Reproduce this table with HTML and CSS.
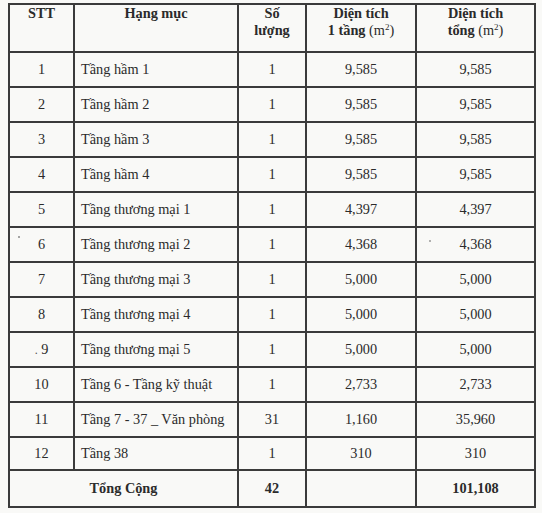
FILE: index.html
```html
<!DOCTYPE html>
<html lang="vi">
<head>
<meta charset="utf-8">
<title>Bảng diện tích</title>
<link rel="stylesheet" href="styles.css">
</head>
<body>
<table class="area-table">
  <colgroup>
    <col class="c-stt"><col class="c-name"><col class="c-qty"><col class="c-one"><col class="c-total">
  </colgroup>
  <thead>
    <tr class="head">
      <th>STT</th>
      <th>Hạng mục</th>
      <th>Số<br>lượng</th>
      <th>Diện tích<br>1 tầng <span class="unit">(m<sup>2</sup>)</span></th>
      <th>Diện tích<br>tổng <span class="unit">(m<sup>2</sup>)</span></th>
    </tr>
  </thead>
  <tbody>
    <tr><td>1</td><td class="name">Tầng hầm 1</td><td>1</td><td>9,585</td><td>9,585</td></tr>
    <tr><td>2</td><td class="name">Tầng hầm 2</td><td>1</td><td>9,585</td><td>9,585</td></tr>
    <tr><td>3</td><td class="name">Tầng hầm 3</td><td>1</td><td>9,585</td><td>9,585</td></tr>
    <tr><td>4</td><td class="name">Tầng hầm 4</td><td>1</td><td>9,585</td><td>9,585</td></tr>
    <tr><td>5</td><td class="name">Tầng thương mại 1</td><td>1</td><td>4,397</td><td>4,397</td></tr>
    <tr><td class="speck-left">6</td><td class="name">Tầng thương mại 2</td><td>1</td><td>4,368</td><td class="speck-right">4,368</td></tr>
    <tr><td>7</td><td class="name">Tầng thương mại 3</td><td>1</td><td>5,000</td><td>5,000</td></tr>
    <tr><td>8</td><td class="name">Tầng thương mại 4</td><td>1</td><td>5,000</td><td>5,000</td></tr>
    <tr><td><span class="dot">.</span> 9</td><td class="name">Tầng thương mại 5</td><td>1</td><td>5,000</td><td>5,000</td></tr>
    <tr><td>10</td><td class="name">Tầng 6 - Tầng kỹ thuật</td><td>1</td><td>2,733</td><td>2,733</td></tr>
    <tr><td>11</td><td class="name">Tầng 7 - 37 _ Văn phòng</td><td>31</td><td>1,160</td><td>35,960</td></tr>
    <tr class="short"><td>12</td><td class="name">Tầng 38</td><td>1</td><td>310</td><td>310</td></tr>
    <tr class="total"><td colspan="2">Tổng Cộng</td><td>42</td><td></td><td>101,108</td></tr>
  </tbody>
</table>
</body>
</html>
```

FILE: styles.css
```css
html, body {
  margin: 0;
  background: #f9f9f7;
}
body {
  padding: 3px 0 0 8px;
  font-family: "Liberation Serif", "Times New Roman", serif;
  color: #2b2b2b;
}
.area-table {
  border-collapse: collapse;
  width: 526px;
  table-layout: fixed;
  font-size: 14.3px;
}
.c-stt { width: 65px; }
.c-name { width: 164px; }
.c-qty { width: 68px; }
.c-one { width: 110px; }
.c-total { width: 119px; }

.area-table th,
.area-table td {
  border: 2px solid #3b3b3b;
  padding: 0;
  text-align: center;
  vertical-align: middle;
}
.area-table th {
  height: 46px;
  vertical-align: top;
  padding-top: 0;
  font-weight: bold;
  line-height: 17px;
}
.area-table th .unit { font-weight: normal; }
.area-table sup {
  font-size: 9px;
  line-height: 0;
  vertical-align: 5px;
}
.area-table td { height: 33px; }
.area-table td.name {
  text-align: left;
  padding-left: 6px;
  white-space: nowrap;
}
.area-table tr.short td { height: 31px; }
.area-table tr.total td {
  height: 35px;
  font-weight: bold;
}
.dot {
  font-size: 12px;
  color: #555;
}
.speck-left, .speck-right { position: relative; }
.speck-left::before {
  content: "";
  position: absolute;
  left: 8px;
  top: 8px;
  width: 2px;
  height: 2px;
  background: #888;
  border-radius: 50%;
}
.speck-right::before {
  content: "";
  position: absolute;
  left: 12px;
  top: 12px;
  width: 2px;
  height: 2px;
  background: #999;
  border-radius: 50%;
}
```
